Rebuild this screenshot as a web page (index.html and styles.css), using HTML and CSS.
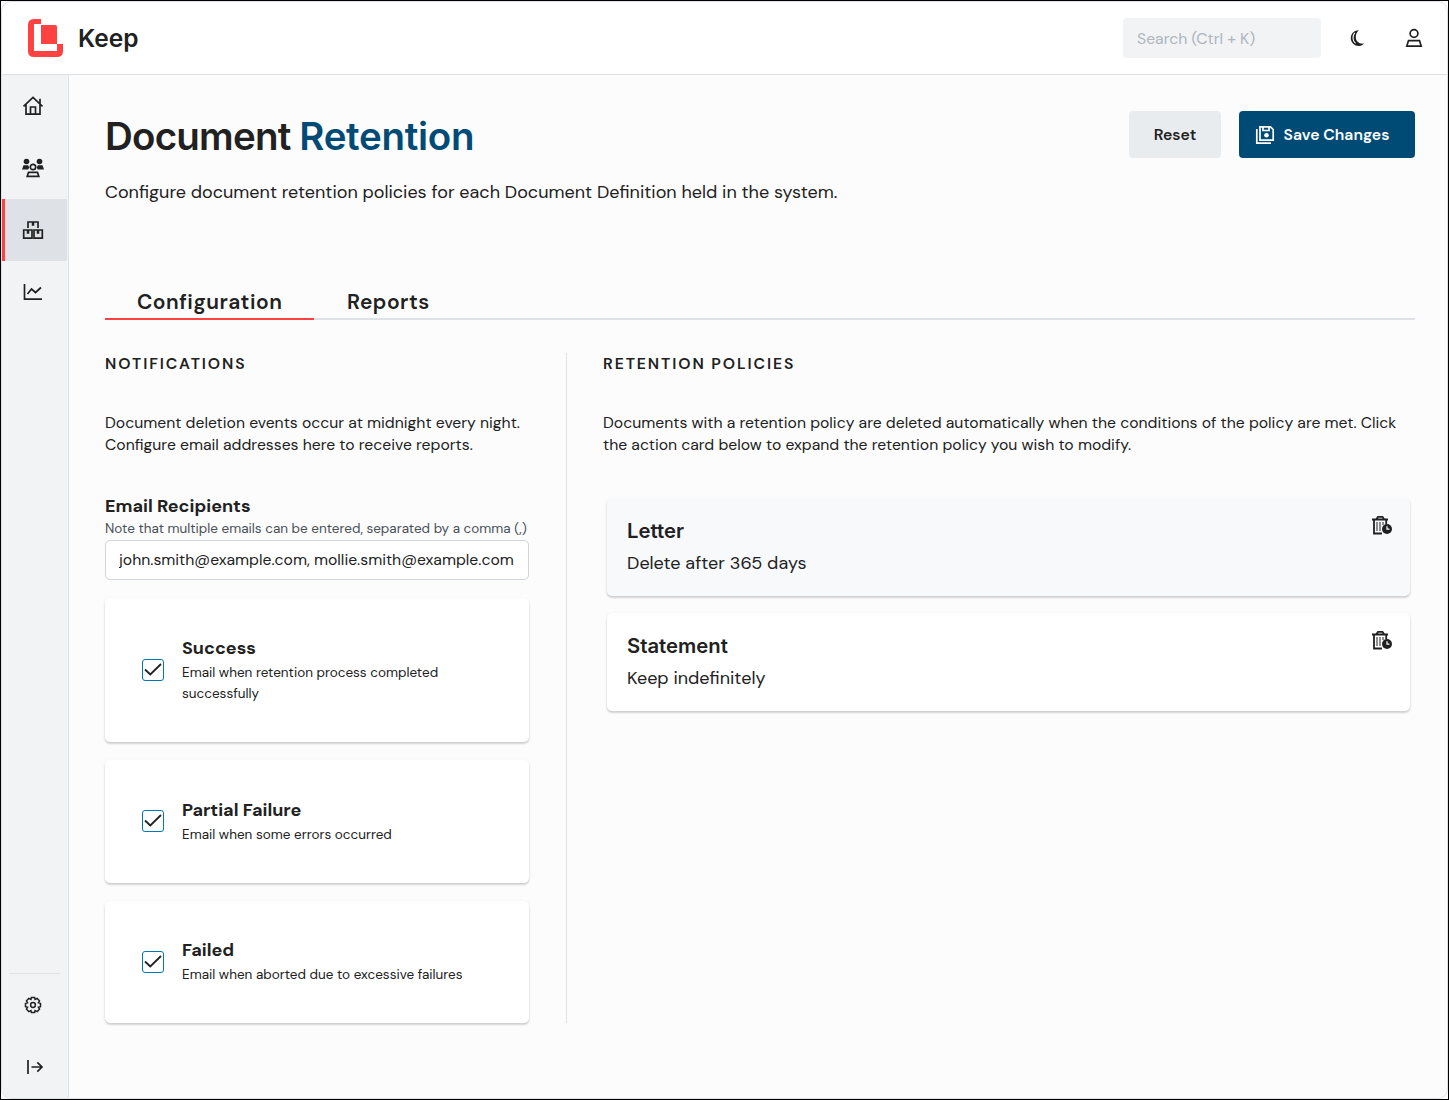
FILE: index.html
```html
<!DOCTYPE html>
<html lang="en">
<head>
    <meta charset="UTF-8">
    <meta name="viewport" content="width=device-width, initial-scale=1.0">
    <title>Keep - Document Retention</title>
    <link rel="stylesheet" href="styles.css">
</head>
<body>
    <!-- shared icon shapes -->
    <svg class="sprite" width="0" height="0">
        <symbol id="bin-clock" viewBox="0 0 22 20">
            <path d="M1 4.500h16M5.500 4L7 1.800h4.500L13 4M3 4.500v14h8M15.200 5v4" fill="none" stroke="#212121" stroke-width="1.8"/>
            <path d="M6 7v9M9 7v9M12 7v3" fill="none" stroke="#555" stroke-width="1.3"/>
            <circle cx="16" cy="14" r="5" fill="#212121"/>
            <path d="M16 11.200v3h2.400" fill="none" stroke="#fff" stroke-width="1.2"/>
        </symbol>
    </svg>
    <div class="window">
        <header class="header">
            <svg class="logo" viewBox="0 0 35 38">
                <path d="M13 0v5H6v27h23v-7h6v7q0 6-6 6H6q-6 0-6-6V6q0-6 6-6z" fill="#fe4242"/>
                <path d="M13 6h14q2 0 2 2v17H13z" fill="#fe4242"/>
            </svg>
            <span class="brand">Keep</span>
            <input class="search" type="text" placeholder="Search (Ctrl + K)">
            <svg class="icon moon" viewBox="0 0 20 20" width="20" height="20">
                <path d="M12 2.200C7.400 2.200 3.800 5.500 3.800 10s3.700 8 8.200 8c2.200 0 4-.9 5-2.400-5 .6-8.200-2.400-8.200-6.600 0-2.800 1.200-5.200 3.200-6.800z" fill="#212121"/>
                <path d="M7.800 4.800C5.300 7.500 5.200 12.500 8.500 15.300" fill="none" stroke="#fff" stroke-width="1.1"/>
            </svg>
            <svg class="icon person" viewBox="0 0 20 20" width="20" height="20">
                <circle cx="10" cy="5.500" r="3.900"/>
                <path d="M4.500 12.600h11l1.700 5.500H2.800z"/>
            </svg>
        </header>
        <div class="layout">
            <nav class="sidebar">
                <a class="nav-item">
                    <svg class="icon" viewBox="0 0 22 22" width="22" height="22">
                        <path d="M1.500 11.300L11 2.500l9.500 8.800M4 9.500v9.700h14V9.500M8.500 19v-7h5v7M18 8.500V3.800"/>
                    </svg>
                </a>
                <a class="nav-item">
                    <svg class="icon" viewBox="0 0 22 22" width="22" height="22">
                        <path class="solid" d="M0 12.500l1.500-4.200h4.700l1 2.200-1 2zM22 12.500l-1.500-4.200h-4.700l-1 2.200 1 2z"/>
                        <circle class="solid" cx="4.500" cy="4.500" r="2.800"/>
                        <circle class="solid" cx="17.500" cy="4.500" r="2.800"/>
                        <circle cx="11" cy="10" r="2.700"/>
                        <path d="M6.500 15.400h9l1.300 3.900H5.200z"/>
                    </svg>
                </a>
                <a class="nav-item active">
                    <svg class="icon" viewBox="0 0 22 22" width="22" height="22">
                        <path d="M6 9V3h10v6M1.700 11h8.300v8.200H1.700zM12 11h8.300v8.200H12z"/>
                        <path d="M11 3v3.700M6 11v3.700M16 11v3.700" class="thick"/>
                    </svg>
                </a>
                <a class="nav-item">
                    <svg class="icon" viewBox="0 0 22 22" width="22" height="22">
                        <path d="M2.500 3v15.200H20M5.500 13l4-5 4 3.500L19 6.500"/>
                    </svg>
                </a>
                <div class="nav-bottom">
                    <a class="nav-item">
                        <svg class="icon gear" viewBox="0 0 18 18" width="18" height="18">
                            <path d="M7.400 1.500h3.200l.5 2 2.100-1.100 2.300 2.400-1.100 2 2.100.6v3.200l-2.100.6 1.100 2-2.300 2.400-2.100-1.100-.5 2H7.400l-.5-2-2.100 1.100-2.300-2.400 1.100-2-2.100-.6V7.400l2.100-.6-1.100-2 2.300-2.400 2.100 1.100z"/>
                            <circle cx="9" cy="9" r="2.400"/>
                        </svg>
                    </a>
                    <a class="nav-item">
                        <svg class="icon expand" viewBox="0 0 18 18" width="18" height="18">
                            <path d="M2 2v14M5.500 9H16M11.300 4.300L16 9l-4.700 4.700"/>
                        </svg>
                    </a>
                </div>
            </nav>
            <main class="main">
                <div class="page-head">
                    <h1>Document <span>Retention</span></h1>
                    <div class="buttons">
                        <button class="button">Reset</button>
                        <button class="button primary">
                            <svg viewBox="0 0 20 20" width="20" height="20">
                                <path d="M5 1.800h10.500l2.700 2.700v10.700H5zM8 2v3.500h6V2M1.800 4v14.200H16" fill="none" stroke="#fff" stroke-width="1.700"/>
                                <circle cx="11.500" cy="10.200" r="2.300" fill="#fff"/>
                            </svg>
                            <span>Save Changes</span>
                        </button>
                    </div>
                </div>
                <p class="lead">Configure document retention policies for each Document Definition held in the system.</p>
                <div class="tabs">
                    <a class="tab active">Configuration</a>
                    <a class="tab">Reports</a>
                </div>
                <div class="columns">
                    <section class="notifications">
                        <h2>Notifications</h2>
                        <p class="intro">Document deletion events occur at midnight every night.<br>Configure email addresses here to receive reports.</p>
                        <label class="field-label" for="emails">Email Recipients</label>
                        <p class="hint">Note that multiple emails can be entered, separated by a comma (,)</p>
                        <input class="emails" type="text" id="emails" value="john.smith@example.com, mollie.smith@example.com">
                        <div class="check-card tall">
                            <span class="checkbox"><svg viewBox="0 0 20 20"><path d="M2 9.500l5.300 5L18 4"/></svg></span>
                            <div class="check-text">
                                <h3>Success</h3>
                                <p>Email when retention process completed<br>successfully</p>
                            </div>
                        </div>
                        <div class="check-card">
                            <span class="checkbox"><svg viewBox="0 0 20 20"><path d="M2 9.500l5.300 5L18 4"/></svg></span>
                            <div class="check-text">
                                <h3>Partial Failure</h3>
                                <p>Email when some errors occurred</p>
                            </div>
                        </div>
                        <div class="check-card">
                            <span class="checkbox"><svg viewBox="0 0 20 20"><path d="M2 9.500l5.300 5L18 4"/></svg></span>
                            <div class="check-text">
                                <h3>Failed</h3>
                                <p>Email when aborted due to excessive failures</p>
                            </div>
                        </div>
                    </section>
                    <section class="policies">
                        <h2>Retention Policies</h2>
                        <p class="intro">Documents with a retention policy are deleted automatically when the conditions of the policy are met. Click<br>the action card below to expand the retention policy you wish to modify.</p>
                        <div class="policy hover">
                            <div>
                                <h3>Letter</h3>
                                <p>Delete after 365 days</p>
                            </div>
                            <svg width="22" height="20"><use href="#bin-clock"/></svg>
                        </div>
                        <div class="policy">
                            <div>
                                <h3>Statement</h3>
                                <p>Keep indefinitely</p>
                            </div>
                            <svg width="22" height="20"><use href="#bin-clock"/></svg>
                        </div>
                    </section>
                </div>
            </main>
        </div>
    </div>
</body>
</html>
```
FILE: styles.css
```css
* {
    box-sizing: border-box;
}
body {
    margin: 0;
    height: 1100px;
    border: 1px solid #000;
    background: #fff;
    color: #212121;
    font-family: "DM Sans", Inter, sans-serif;
    overflow: hidden;
}
h1, h2, h3, p {
    margin: 0;
    white-space: nowrap;
}
.sprite {
    display: block;
}
.window {
    display: flex;
    flex-direction: column;
    height: 1098px;
    border: 1px solid #dee2e6;
    border-radius: 10px;
    overflow: hidden;
}
.header {
    display: flex;
    align-items: center;
    height: 73px;
    padding: 0 23px 0 26px;
    border-bottom: 1px solid #dee0e2;
}
.logo {
    width: 35px;
    height: 38px;
}
.brand, h1, .policy h3 {
    font-family: Inter, sans-serif;
    font-weight: 600;
}
.brand {
    margin-left: 15px;
    font-size: 24.5px;
}
.search {
    width: 198px;
    height: 40px;
    margin-left: auto;
    padding: 0 14px;
    border: none;
    border-radius: 4px;
    background: #f1f3f5;
    font-family: inherit;
    font-size: 15.75px;
}
.search::placeholder {
    color: #adb5bd;
}
.icon {
    display: block;
    fill: none;
    stroke: #212121;
    stroke-width: 1.7;
}
.icon .solid {
    fill: #212121;
    stroke: none;
}
.icon .thick {
    stroke-width: 2.5;
}
.icon.gear {
    stroke-width: 1.5;
}
.moon {
    margin-left: 26px;
    stroke: none;
}
.person {
    margin-left: 37px;
}
.layout {
    display: flex;
    flex: 1;
}
.sidebar {
    display: flex;
    flex-direction: column;
    width: 67px;
    border-right: 1px solid #dee2e6;
    background: #f1f3f5;
}
.nav-item {
    display: flex;
    align-items: center;
    justify-content: center;
    height: 62px;
    padding-right: 7px;
    border-left: 3px solid transparent;
}
.nav-item.active {
    margin-right: 1px;
    padding-right: 6px;
    border-left-color: #fe4242;
    background: #dee2e6;
}
.nav-bottom {
    margin-top: auto;
}
.nav-bottom::before {
    content: "";
    display: block;
    height: 1px;
    margin: 0 8px 0 7px;
    background: #dee2e6;
}
.nav-item .expand {
    margin-left: 3px;
}
.main {
    flex: 1;
    padding: 36px 32px 0 36px;
    background: #fcfcfc;
}
.page-head {
    display: flex;
    justify-content: space-between;
    height: 47px;
}
h1 {
    font-size: 38.5px;
    line-height: 51px;
    letter-spacing: -0.8px;
}
h1 span {
    color: #004b76;
    letter-spacing: -0.3px;
}
.buttons {
    display: flex;
    gap: 18px;
}
.button {
    display: flex;
    align-items: center;
    justify-content: center;
    gap: 9px;
    width: 92px;
    height: 47px;
    padding: 0;
    border: none;
    border-radius: 4px;
    background: #e9ecef;
    color: #212121;
    font-family: inherit;
    font-size: 15.75px;
    font-weight: 600;
}
.button.primary {
    width: 176px;
    padding-right: 10px;
    background: #004b76;
    color: #fff;
}
.lead {
    margin-top: 21px;
    font-size: 18px;
    line-height: 26px;
}
.tabs {
    display: flex;
    height: 39px;
    margin-top: 76px;
    border-bottom: 2px solid #dee2e6;
}
.tab {
    height: 39px;
    padding: 0 33px;
    font-size: 21px;
    font-weight: 600;
    line-height: 42px;
    letter-spacing: 0.5px;
}
.tab.active {
    width: 209px;
    padding: 0 32px;
    border-bottom: 2px solid #fe4242;
}
.columns {
    display: flex;
    height: 670px;
    margin-top: 33px;
}
.notifications {
    width: 462px;
    padding-right: 37px;
    border-right: 1px solid #dee2e6;
}
.policies {
    flex: 1;
    padding-left: 36px;
}
h2 {
    font-size: 15.75px;
    font-weight: 600;
    line-height: 22px;
    letter-spacing: 1.9px;
    text-transform: uppercase;
}
.intro {
    margin-top: 37px;
    font-size: 15.75px;
    line-height: 22px;
}
.field-label {
    display: block;
    margin-top: 38px;
    font-size: 18px;
    font-weight: 700;
    line-height: 24px;
}
.hint {
    color: #495057;
    font-size: 13.5px;
    line-height: 22px;
}
.emails {
    display: block;
    width: 424px;
    height: 40px;
    padding: 0 12px 2px 13px;
    border: 1px solid #ced4da;
    border-radius: 5px;
    background: #fff;
    color: #212121;
    font-family: inherit;
    font-size: 15.75px;
}
.check-card {
    display: flex;
    align-items: center;
    width: 424px;
    height: 122.5px;
    margin-top: 18px;
    padding-left: 37px;
    border-radius: 5px;
    background: #fff;
    box-shadow: 0 1px 3px rgba(0,0,0,0.1), 0 2px 2px rgba(0,0,0,0.12);
}
.check-card.tall {
    height: 144px;
}
.checkbox {
    width: 22px;
    height: 22px;
    border: 1px solid #0077b6;
    border-radius: 3px;
}
.checkbox svg {
    display: block;
    fill: none;
    stroke: #212121;
    stroke-width: 1.8;
}
.check-text {
    margin: -1px 0 0 18px;
}
.tall .check-text {
    margin-top: -2px;
}
.check-text h3 {
    margin-bottom: 1px;
    font-size: 18px;
    font-weight: 700;
    line-height: 26px;
}
.check-text p {
    font-size: 13.5px;
    line-height: 21px;
}
.policy {
    display: flex;
    justify-content: space-between;
    width: 803px;
    height: 97.5px;
    margin: 17.5px 0 0 4px;
    padding: 17px 17px 0 20px;
    border-radius: 5px;
    background: #fff;
    box-shadow: 0 1px 3px rgba(0,0,0,0.1), 0 2px 2px rgba(0,0,0,0.12);
}
.intro + .policy {
    margin-top: 42px;
}
.policy.hover {
    background: #f8f9fb;
}
.policy h3 {
    font-size: 20.3px;
    line-height: 32px;
}
.policy p {
    font-size: 18px;
    line-height: 32px;
}
```
